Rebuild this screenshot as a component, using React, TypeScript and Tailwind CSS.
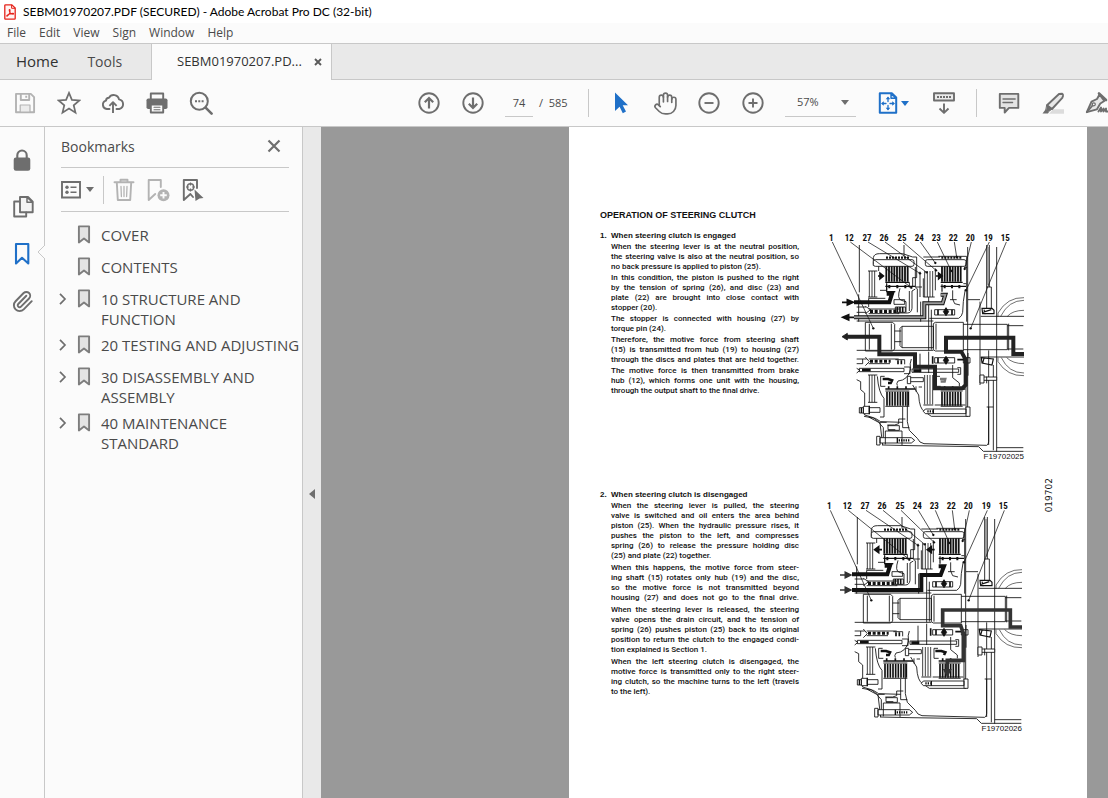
import React from 'react';
import { Hand, Paperclip } from 'lucide-react';

type IconProps = { children: React.ReactNode; className?: string };

function Glyph({ children, className = 'size-6' }: IconProps) {
  return (
    <svg
      viewBox="0 0 24 24"
      className={className}
      fill="none"
      stroke="currentColor"
      strokeWidth="1.9"
      strokeLinejoin="round"
      strokeLinecap="round"
      aria-hidden="true"
    >
      {children}
    </svg>
  );
}

function ToolButton({ label, children, className = '' }: IconProps & { label: string }) {
  return (
    <button type="button" aria-label={label} className={`flex h-11 w-11 shrink-0 items-center justify-center ${className}`}>
      {children}
    </button>
  );
}

function Caret({ className = 'text-[#6e6e6e]' }: { className?: string }) {
  return (
    <svg viewBox="0 0 8 5" className={`h-[5px] w-2 ${className}`} aria-hidden="true">
      <path d="M0 0h8L4 5z" fill="currentColor" />
    </svg>
  );
}

function TitleBar() {
  return (
    <div className="flex h-[23px] items-center bg-white pl-1 text-black">
      <svg viewBox="0 0 12 16" className="mr-[7px] h-4 w-3" aria-hidden="true">
        <path d="M.8 1.6Q.8.8 1.6.8h6.2l3.4 3.3v10.3q0 .8-.8.8H1.6q-.8 0-.8-.8z" fill="#fff4f3" stroke="#e5231b" strokeWidth="1.3" />
        <path d="M7.6.9v3.4h3.5" fill="none" stroke="#e5231b" />
        <path d="M3 12.2c2-1.4 3.2-4 3-6.2 0-.7-.8-.7-.8 0 .2 2.2 1.6 4 3.8 4.3.8 0 .8-.9 0-.9-2.2 0-4.6.8-6 2-.5.4-.3.9 0 .8z" fill="none" stroke="#e5231b" strokeWidth="1.1" />
      </svg>
      <h1 className="font-['Lato',sans-serif] text-[12px]">SEBM01970207.PDF (SECURED) - Adobe Acrobat Pro DC (32-bit)</h1>
    </div>
  );
}

function MenuBar() {
  return (
    <nav className="flex h-5 items-center gap-[13px] bg-[#fbfbfb] pl-[7px] text-[12px] text-[#4a4a4a]">
      {['File', 'Edit', 'View', 'Sign', 'Window', 'Help'].map((m) => (
        <button key={m} type="button">
          {m}
        </button>
      ))}
    </nav>
  );
}

function TabBar() {
  return (
    <div className="flex h-[37px] border-t border-[#c8c8c8] bg-[#e9e9e9] text-[#323232]">
      <div className="flex w-[151px] shrink-0 items-center gap-[29px] border-b border-[#c8c8c8] pl-4">
        <button type="button" className="text-[15px]">Home</button>
        <button type="button" className="text-[14px] text-[#4a4a4a]">Tools</button>
      </div>
      <div className="flex w-[181px] shrink-0 items-center border-x border-[#c8c8c8] bg-[#fbfbfb] pl-[25px] text-[13px]">
        <button type="button" className="w-[137px] text-left whitespace-nowrap">SEBM01970207.PD...</button>
        <button type="button" aria-label="Close tab">
          <svg viewBox="0 0 8 8" className="size-2" aria-hidden="true">
            <path d="M1 1l6 6M7 1L1 7" stroke="#5a5a5a" strokeWidth="1.9" />
          </svg>
        </button>
      </div>
      <div className="grow border-b border-[#c8c8c8]" />
    </div>
  );
}

function Divider() {
  return <div className="mx-[10px] h-7 w-px shrink-0 bg-[#c8c8c8]" />;
}

function Toolbar() {
  return (
    <div className="flex h-[47px] items-center overflow-hidden border-b border-[#c8c8c8] bg-[#fbfbfb] pl-[3px] text-[#6e6e6e]">
      <ToolButton label="Save" className="text-[#b3b3b3]">
        <Glyph>
          <path d="M3 2.9h14.8l3.3 3.3v15H3z" />
          <path d="M7.8 3v6h8.4V3M13.2 4.8v2" strokeLinecap="butt" />
          <path d="M7.2 14h9.8v7H7.2z" fill="#ececec" strokeWidth="1.2" />
        </Glyph>
      </ToolButton>
      <ToolButton label="Star">
        <Glyph>
          <path d="M12 1.9l2.9 7 7.4.6-5.6 4.8 1.8 7.3L12 17.6l-6.5 4 1.8-7.3-5.6-4.8 7.4-.6z" strokeLinejoin="miter" strokeWidth="1.7" />
        </Glyph>
      </ToolButton>
      <ToolButton label="Upload">
        <Glyph>
          <path d="M8.5 18H5.8A4.3 4.3 0 0 1 5 9.600A3 3 0 0 1 8 6.800 5.400 5.400 0 0 1 18 8.400a4.900 4.900 0 0 1 .3 9.600h-2.800" />
          <path d="M12 22V11.500M8.400 14.800L12 11.200l3.600 3.600" strokeLinecap="butt" />
        </Glyph>
      </ToolButton>
      <ToolButton label="Print">
        <Glyph>
          <path d="M5.800 8V2.500h12.400V8" />
          <rect x="1.500" y="7.500" width="21" height="10.500" rx="1.800" fill="currentColor" stroke="none" />
          <path d="M5.800 13.500h12.400v8H5.800z" fill="#fbfbfb" />
          <path d="M9 16.300h6M9 18.800h6" strokeWidth="1.100" />
        </Glyph>
      </ToolButton>
      <ToolButton label="Find">
        <Glyph>
          <circle cx="10.300" cy="10.300" r="8.500" strokeWidth="2" />
          <path d="M16.600 16.600l6 6" strokeWidth="2.600" />
          <path d="M6 9.300h2v2H6zM9.300 9.300h2v2h-2zM12.600 9.300h2v2h-2z" fill="currentColor" stroke="none" />
        </Glyph>
      </ToolButton>

      <div className="-mr-[11px] ml-auto flex shrink-0 items-center text-[12px]">
        <ToolButton label="Previous page">
          <Glyph>
            <circle cx="12" cy="12" r="9.700" />
            <path d="M12 17.500V7.500M7.800 11.200L12 7l4.200 4.200" strokeWidth="2.200" strokeLinecap="butt" strokeLinejoin="miter" />
          </Glyph>
        </ToolButton>
        <ToolButton label="Next page">
          <Glyph>
            <circle cx="12" cy="12" r="9.700" />
            <path d="M12 6.500v10M7.800 12.800L12 17l4.200-4.200" strokeWidth="2.200" strokeLinecap="butt" strokeLinejoin="miter" />
          </Glyph>
        </ToolButton>
        <input
          aria-label="Page number"
          defaultValue="74"
          className="ml-[10px] h-7 w-7 border-b border-[#c8c8c8] bg-transparent text-center text-[11px] text-[#4a4a4a] outline-none"
        />
        <span className="ml-[6px] w-[39px] whitespace-pre text-[11px] text-[#4a4a4a]">/  585</span>
        <Divider />
        <ToolButton label="Select">
          <Glyph>
            <path d="M6 1.500l13 12.700h-5.300l3.300 6.400-3.200 1.600-3.200-6.500L6 20z" fill="#1f70c8" stroke="none" />
          </Glyph>
        </ToolButton>
        <ToolButton label="Pan">
          <Hand className="size-[25px]" strokeWidth={1.6} />
        </ToolButton>
        <ToolButton label="Zoom out">
          <Glyph>
            <circle cx="12" cy="12" r="9.700" />
            <path d="M7.500 12h9" strokeLinecap="butt" />
          </Glyph>
        </ToolButton>
        <ToolButton label="Zoom in">
          <Glyph>
            <circle cx="12" cy="12" r="9.700" />
            <path d="M7.500 12h9M12 7.500v9" strokeLinecap="butt" />
          </Glyph>
        </ToolButton>
        <div className="relative ml-[10px] flex h-7 w-[71px] items-center border-b border-[#c8c8c8]">
          <select aria-label="Zoom level" defaultValue="57%" className="h-7 w-full appearance-none bg-transparent pl-3 text-[11px] text-[#4a4a4a] outline-none">
            <option>57%</option>
            <option>100%</option>
          </select>
          <span className="pointer-events-none absolute right-[7px]">
            <Caret />
          </span>
        </div>
        <button type="button" aria-label="Fit page" className="ml-5 flex h-11 w-[46px] items-center gap-px text-[#1f70c8]">
          <Glyph>
            <path d="M3.800 2.200h12l4.400 4.300v15.300H3.800z" strokeWidth="2" />
            <path d="M15 2.500v4.700h5z" fill="#cfe0f4" strokeWidth="1.400" />
            <path d="M12 7v3.500M12 14.500V18M6.500 12.500H10M14 12.500h3.500" strokeWidth="1.300" />
            <path d="M12 5.500l2.300 2.800H9.700zM12 19.500l2.300-2.800H9.700zM5 12.500l2.800-2.300v4.600zM19 12.500l-2.800-2.300v4.600z" fill="currentColor" stroke="none" />
          </Glyph>
          <Caret className="text-[#1f70c8]" />
        </button>
        <ToolButton label="Page display">
          <Glyph>
            <path d="M2 2.300h20v7.200H2z" fill="#ececec" strokeWidth="1.900" />
            <path d="M5 5h2v2H5zM8 5h2v2H8zM11 5h2v2h-2zM14 5h2v2h-2zM17 5h2v2h-2z" fill="currentColor" stroke="none" />
            <path d="M12 12.500v9M7.500 17.500l4.500 4.400 4.500-4.400" strokeLinecap="butt" />
          </Glyph>
        </ToolButton>
        <Divider />
        <ToolButton label="Comment">
          <Glyph>
            <path d="M2.800 2.900h18.500v14H12l-4.300 4.600v-4.600H2.800z" fill="#e4e4e4" />
            <path d="M6 8h12.200M6 11.500h9.600" strokeWidth="1.300" />
          </Glyph>
        </ToolButton>
        <ToolButton label="Highlight">
          <Glyph>
            <path d="M12 18.300h11v4.500H8z" fill="#dcdcdc" stroke="none" />
            <path d="M18 3l3-.3q1.300.6 1 2.300l-.7 1.800L11 18l-5-3.800z" fill="#e8e8e8" />
            <path d="M6 14.200L11 18l-3 2.300-3-.5z" fill="currentColor" strokeWidth="1" />
            <path d="M4.500 18.500L8 21l-1 1.500H1.500z" fill="currentColor" stroke="none" />
          </Glyph>
        </ToolButton>
        <ToolButton label="Sign">
          <Glyph>
            <path d="M14 2.500l7 6.500" strokeWidth="2.600" />
            <path d="M14.500 3.500L12 8l-5.500 2.700L1.800 21.200l10-2.800 3.500-5.900 4-2.500z" fill="#e8e8e8" />
            <path d="M2 21l5.500-6.500M13.500 20.500l2.500-4v4l2.500-3v3l2.500-3v3h3" />
            <circle cx="8.800" cy="13.300" r="1.500" fill="#fbfbfb" strokeWidth="1.300" />
          </Glyph>
        </ToolButton>
      </div>
    </div>
  );
}

function Rail() {
  const item = 'relative flex h-[46px] w-11 items-center justify-center';
  return (
    <aside className="flex w-[45px] shrink-0 flex-col gap-px border-r border-[#c8c8c8] bg-[#fbfbfb] pt-[10px] text-[#6e6e6e]">
      <button type="button" aria-label="Security" className={item}>
        <Glyph>
          <path d="M7.300 10.500V7.200a4.700 4.700 0 0 1 9.400 0v3.300" strokeWidth="2.100" />
          <rect x="3.700" y="9.500" width="16.600" height="13.200" rx="2.200" fill="currentColor" stroke="none" />
        </Glyph>
      </button>
      <button type="button" aria-label="Page thumbnails" className={item}>
        <Glyph className="ml-[2px] size-6">
          <path d="M9 2h8l4.700 4.700v10.500H9z" fill="#f4f4f4" />
          <path d="M16 2.300v5h5.500z" strokeWidth="1.500" />
          <path d="M8.500 6.500H3.200v15h12v-4" />
        </Glyph>
      </button>
      <button type="button" aria-label="Bookmarks" className={`${item} text-[#1f70c8]`}>
        <Glyph>
          <path d="M6 2h12.300v19.500L12 15.800 6 21.500z" strokeWidth="2.100" />
        </Glyph>
        <svg viewBox="0 0 8 14" className="absolute top-[14px] -right-px h-[14px] w-2" aria-hidden="true">
          <path d="M8 0L1 7l7 7" fill="#fbfbfb" stroke="#c8c8c8" />
        </svg>
      </button>
      <button type="button" aria-label="Attachments" className={item}>
        <Paperclip className="size-[23px]" strokeWidth={2} />
      </button>
    </aside>
  );
}

const bookmarks = [
  { title: 'COVER', expandable: false },
  { title: 'CONTENTS', expandable: false },
  { title: '10 STRUCTURE AND FUNCTION', expandable: true },
  { title: '20 TESTING AND ADJUSTING', expandable: true },
  { title: '30 DISASSEMBLY AND ASSEMBLY', expandable: true },
  { title: '40 MAINTENANCE STANDARD', expandable: true },
];

function BookmarksPanel() {
  return (
    <section className="w-[258px] shrink-0 border-r border-[#c8c8c8] bg-[#fbfbfb] text-[#4a4a4a]">
      <div className="mr-[13px] ml-4">
        <div className="flex h-[41px] items-center justify-between border-b border-[#c8c8c8] pr-2 pb-0.5">
          <h2 className="text-[14px]">Bookmarks</h2>
          <button type="button" aria-label="Close panel">
            <svg viewBox="0 0 14 14" className="size-[14px]" aria-hidden="true">
              <path d="M1.500 1.500l11 11M12.500 1.500l-11 11" stroke="#6e6e6e" strokeWidth="2.200" />
            </svg>
          </button>
        </div>
        <div className="flex h-11 items-center border-b border-[#c8c8c8] text-[#6e6e6e]">
          <button type="button" aria-label="Options" className="flex items-center gap-[5px]">
            <svg viewBox="0 0 20 18" className="h-[18px] w-5" fill="none" stroke="currentColor" aria-hidden="true">
              <path d="M1 1h18v15.500H1z" strokeWidth="1.900" />
              <path d="M9.500 6.300h6M9.500 11.300h6" strokeWidth="1.600" />
              <circle cx="6" cy="6.300" r="1.700" fill="currentColor" stroke="none" />
              <circle cx="6" cy="11.300" r="1.700" fill="currentColor" stroke="none" />
            </svg>
            <Caret />
          </button>
          <div className="ml-[9px] h-7 w-px bg-[#c8c8c8]" />
          <button type="button" aria-label="Delete bookmark" className="ml-2 text-[#b3b3b3]">
            <Glyph>
              <path d="M2.500 4.300h19M8.500 4V1.700h7V4M4.800 4.500l1 17.500h12.400l1-17.500" />
              <path d="M9 8.500l.4 10M12 8.500v10M15 8.500l-.4 10" strokeWidth="1.300" />
            </Glyph>
          </button>
          <button type="button" aria-label="New bookmark" className="ml-[10px] text-[#b3b3b3]">
            <Glyph>
              <path d="M14.800 9V2H2.700v20l6.500-6" />
              <circle cx="17.500" cy="17.300" r="6" fill="currentColor" stroke="none" />
              <path d="M17.500 14v6.600M14.200 17.300h6.600" stroke="#fbfbfb" strokeLinecap="butt" />
            </Glyph>
          </button>
          <button type="button" aria-label="Find current bookmark" className="ml-[11px]">
            <Glyph>
              <path d="M16 10V2H2.800v20l6.600-6 2.600 3" />
              <circle cx="9.500" cy="9" r="3.200" strokeWidth="1.400" />
              <path d="M9.500 4.500v3M9.500 10.500v3M5 9h3M11 9h3" strokeWidth="1.200" strokeLinecap="butt" />
              <path d="M13.500 11.500l9 8.500-4 .5-4 2.500z" fill="currentColor" stroke="none" />
            </Glyph>
          </button>
        </div>
      </div>
      <ul className="pt-[7px] pl-[14px] text-[15px]">
        {bookmarks.map((b) => (
          <li key={b.title} className="flex min-h-8 items-start pt-[6px]">
            <span className="flex h-5 w-[18px] shrink-0 items-center">
              {b.expandable && (
                <button type="button" aria-label={`Expand ${b.title}`}>
                  <svg viewBox="0 0 8 12" className="h-3 w-2" aria-hidden="true">
                    <path d="M1 .8L6 6l-5 5.200" fill="none" stroke="#6e6e6e" strokeWidth="1.700" />
                  </svg>
                </button>
              )}
            </span>
            <svg viewBox="0 0 14 20" className="mr-[10px] h-5 w-[14px] shrink-0" aria-hidden="true">
              <path d="M1.900 1.400h10.200v16L7 13.400l-5.100 4z" fill="#e4e4e4" stroke="#7d7d7d" strokeWidth="1.900" strokeLinejoin="round" />
            </svg>
            <a href="#page" className="w-[201px] leading-5">{b.title}</a>
          </li>
        ))}
      </ul>
    </section>
  );
}

const plates = (from: number, to: number, top: number, bottom: number) => {
  let d = '';
  for (let x = from; x <= to; x += 8) d += `M${x} ${top}V${bottom}`;
  return d;
};

type Label = { n: string; x: number; to: [number, number] };

const labels: Label[] = [
  { n: '1', x: 34, to: [160, 310] },
  { n: '12', x: 88, to: [274, 188] },
  { n: '27', x: 141, to: [300, 145] },
  { n: '26', x: 192, to: [320, 142] },
  { n: '25', x: 246, to: [348, 136] },
  { n: '24', x: 298, to: [346, 114] },
  { n: '23', x: 349, to: [394, 138] },
  { n: '22', x: 400, to: [410, 96] },
  { n: '20', x: 451, to: [434, 132] },
  { n: '19', x: 505, to: [438, 196] },
  { n: '15', x: 556, to: [452, 310] },
];

function ClutchDrawing({ engaged }: { engaged: boolean }) {
  const baseline = engaged ? 47 : 36;
  return (
    <svg
      viewBox={engaged ? '24 24 588 660' : '24 12 588 672'}
      className={engaged ? 'h-[220px] w-[196px]' : 'h-[224px] w-[196px]'}
      role="img"
      aria-label={engaged ? 'Steering clutch engaged' : 'Steering clutch disengaged'}
      fill="none"
      stroke="#111"
      strokeWidth="2.600"
    >
      {/* housing outline */}
      <path d="M118 60V202M116 208V290M252 60V95M500 60V250M508 60V186M500 186h14v64M530 66V680M110 246h28M110 262h28M110 288H340M110 376H340" />
      <path d="M504 66V180" stroke="#777" strokeWidth="4" />
      <path d="M160 122V98q2-12 18-12h70l30 10h12v62h-12v26M310 96h50M355 94h85v34h-8M443 66V576" />
      <path d="M110 464l12 6v24l12 10v66l26 8 20 16 8 66M186 660l90 2 200 3 14 14h120M132 574l34 6 16 10 66 2" />
      <path d="M278 480l18 30q2 42 18 50l20 14h106M262 500v90l6 26 24 24q6 14 20 16l188 5q6-2 6-12V546M506 376v284M520 420v256M530 668h80M500 546h20" />
      <path d="M146 576l30 16 14 16v30M248 546v62h20M202 600h22l12-4v-14h20M204 600v14h22M180 592h20" />

      {/* shafts */}
      <path d="M136 292h82l6 6v74l-6 6h-82zM224 318h20M224 350h20M246 304h94v64h-94zM246 304l-6 6v52l6 6M340 296l6-4h84v86h-84l-6-4zM430 298h132v76H430M566 296V376M562 302h48M562 372h48M482 274h130M482 396h130" />
      <path d="M148 296v78M214 296v78M348 296v78M480 230V480M444 224h36M444 452V384" />
      {/* ring gear */}
      <path d="M612 218q-50-2-78 46v12M612 226q-46 0-70 48M612 256q-34 0-50 18M612 452q-50 2-78-42v-12M612 444q-46 0-68-46M612 416q-34 0-52-18" strokeWidth="1.800" />

      {/* left and right upper packs */}
      <rect x="160" y="104" width="122" height="20" rx="6" fill="#fff" />
      <rect x="316" y="104" width="122" height="20" rx="6" fill="#fff" />
      <path d="M198 98h70M364 98h60" strokeWidth="7" strokeDasharray="6 3" />
      <path d={plates(199, 268, 124, 170) + plates(366, 424, 124, 170)} strokeWidth="5.500" />
      <path d="M196 172h72M362 172h66" strokeWidth="4" />
      <path d={plates(148, 170, 138, 216) + plates(314, 344, 138, 216)} strokeWidth="2.400" />
      <path d="M144 138h28M144 216h28M310 160v56h34M346 130v66M176 124v14M180 196h20v-24M286 126v60l6 6v70M288 186h18M302 230v60M326 216v160M334 254v120M268 172v16M300 140v76" />
      <path d="M196 184h90M362 184h76M200 178v22h26M366 178v22" strokeWidth="3.500" />
      <path d="M208 180v10M232 180v10M256 180v10M374 180v10M396 180v10M418 180v10" strokeWidth="6" />
      <path d="M286 192l-10 6v52q-2 14-14 14h-30M240 190q-10 32 4 36l14 4v32M436 192q-8 40-8 70-2 12-12 18h-88M398 196v26l6 14 16 4M268 198v60M222 224h32v14h-32zM390 224h20M146 220v26M146 220h50" />
      <path d="M440 176V290M430 176h10v-50" />

      {/* bearings above the shafts */}
      <path d="M136 244l16 10-16 12M146 252h92M146 266h92M344 254h60v16h-60zM226 246h30v16h-30z" />
      <path d="M150 259h80" strokeWidth="10" strokeDasharray="9 5" />
      <path d="M378 248l8 12-8 12-8-12z" fill="#111" />
      <path d="M354 254v16M396 254v16M240 246v16M248 246v16M232 246v16" strokeWidth="5" />
      <path d="M486 250h30l6 6v10h-34zM492 254l4 14M488 262l26-8" strokeWidth="3.500" />

      {/* bearings below the shafts */}
      <path d="M110 402h30M110 416h18v-14M146 402h90M146 416h64M344 398h60v16h-60zM226 404h28v14M136 396l12 14-12 12M430 398h20v16h-20z" />
      <path d="M150 409h62" strokeWidth="9" strokeDasharray="9 5" />
      <path d="M378 394l8 12-8 12-8-12z" fill="#111" />
      <path d="M338 394v22M354 398v16M412 404h26M234 406v12M244 406v12" strokeWidth="5" />
      <path d="M484 398l36 4-4 18-30-6zM492 400l-4 14" strokeWidth="3.500" />

      {/* lower bolts and pistons */}
      <path d="M118 430h134v10H118zM252 426h18v20h-18M276 432h140v10H276zM412 428h10v20h-10M262 454h10v22h-10zM272 458h38v12h-38M110 430l10 6-10 8" fill="#fff" />
      <path d="M126 435h26M280 437h24" strokeWidth="8" />
      <path d={plates(148, 170, 450, 532) + plates(314, 338, 450, 538)} strokeWidth="2.400" />
      <path d="M144 450h28M144 532h28M172 454q4 50 20 66v56h-12M196 484h-14v-30h12M362 484h-14v-30h12M274 402q-6 14-2 30-8 34-38 36-6 8-2 14M398 420v38l20 16v10M300 386v56M326 380v64M288 484v16M296 486h10M344 540h92M310 540h30" />
      <path d="M196 492h90M362 492h74M206 484v10M232 484v10M258 484v10M374 484v10M398 484v10" strokeWidth="5" />
      <path d={plates(201, 268, 500, 542) + plates(366, 424, 500, 542)} strokeWidth="5" />
      <path d="M196 498h72M196 544h72M362 498h66M362 544h66M438 480v70" />
      <path d="M118 548h12v16h-12zM130 544h18v22h-18zM148 548h32v14h-32zM316 552h122v14H316l-6-7zM438 546h12v28h-12zM170 634h10v26h-10zM180 638h94l10 8-10 8h-94zM480 450h12v24h-12zM492 456h38v10h-38" fill="#fff" />
      <path d="M148 542v26M124 548v16M340 552v14M232 638v16" strokeWidth="4" />
      <path d="M236 646h34M322 559h16" strokeWidth="7" strokeDasharray="4 3" />
      <path d="M196 658v-40h50v42M204 602h34v14h-34M500 455v20" />

      {/* piston direction arrows */}
      <path
        d={engaged ? 'M174 153h8M190 153l-10-8v16zM348 153h8M366 153l-10-8v16z' : 'M192 158h-14M170 158l12-9v18zM350 158h-14M328 158l12-9v18z'}
        fill="#111"
        strokeWidth="5"
      />

      {/* oil passages */}
      <g strokeLinejoin="miter">
        <path d="M102 232h106l8-26h-16" strokeWidth="12" />
        <path d="M188 462h16l12 4-4 8h-8" strokeWidth="8" />
        {engaged ? (
          <>
            <path d="M102 277h211v-42h55l8-26h-14" strokeWidth="12" />
            <path d="M102 277h211v-42h55l8-26h-14" stroke="#999" strokeWidth="6" />
            <path d="M66 232h16M100 232l-18-8v16z" fill="#111" strokeWidth="5" />
            <path d="M102 277H86M68 277l18-8v16z" fill="#111" strokeWidth="5" />
            <path d="M360 462h16l-2 8h-12" stroke="#777" strokeWidth="7" />
          </>
        ) : (
          <>
            <path d="M102 279h208v-45h58l10-26h-16" strokeWidth="12" />
            <path d="M66 234h16M98 234l-16-8v16zM66 279h16M98 279l-16-8v16z" fill="#333" stroke="#333" strokeWidth="5" />
            <path d="M352 462h18l12 4-4 8" strokeWidth="8" />
          </>
        )}
      </g>

      {/* power flow */}
      {engaged ? (
        <g stroke="#222">
          <path d="M612 387h-32v-49H378v42h46l13 24v76l-10 10h-82v-65h-60v-37H178v-53H80" strokeWidth="12" />
          <path d="M66 335l16-10v20z" fill="#222" />
        </g>
      ) : (
        <g stroke="#333">
          <path d="M612 390h-35v-51H374v47h54l8 22v82h-48v28" strokeWidth="11" />
          <path d="M388 538l-10-20h20z" fill="#333" strokeWidth="4" />
        </g>
      )}

      {/* reference numbers with their leader lines */}
      {labels.map((l) => (
        <g key={l.n}>
          <path d={`M${l.x + 3} ${baseline + 4}L${l.to[0]} ${l.to[1]}`} strokeWidth="2.200" />
          <circle cx={l.to[0]} cy={l.to[1]} r="3.500" fill="#111" stroke="none" />
          <text
            x={l.x}
            y={baseline}
            textAnchor="middle"
            fill="#111"
            stroke="none"
            fontSize="27"
            fontWeight="700"
            fontFamily="'Roboto Condensed', 'Open Sans Condensed', 'Liberation Sans Narrow', Roboto, sans-serif"
          >
            {l.n}
          </text>
        </g>
      ))}
    </svg>
  );
}

type Paragraph = { lines: string[]; full?: boolean };

type SectionProps = {
  number: string;
  title: string;
  paragraphs: Paragraph[];
  caption: string;
  engaged: boolean;
};

function ManualSection({ number, title, paragraphs, caption, engaged }: SectionProps) {
  return (
    <section className="flex justify-between">
      <div className="grid grid-cols-[11px_188px] content-start leading-[10px]">
        <b>{number}.</b>
        <h4 className="font-bold">{title}</h4>
        <div className={`col-start-2 flex flex-col pt-px font-['Roboto',sans-serif] font-medium ${engaged ? 'gap-px' : 'gap-0.5'}`}>
          {paragraphs.map(({ lines, full }) => (
            <p key={lines[0]}>
              {lines.map((line, i) => (
                <span
                  key={line}
                  className={`block whitespace-nowrap ${full || i < lines.length - 1 ? '[text-align-last:justify]' : ''}`}
                >
                  {line}
                </span>
              ))}
            </p>
          ))}
        </div>
      </div>
      <figure className={engaged ? 'pt-[2px]' : 'pt-[11px] pr-[2px]'}>
        <ClutchDrawing engaged={engaged} />
        <figcaption className="text-right leading-2">{caption}</figcaption>
      </figure>
    </section>
  );
}

const engagedText: Paragraph[] = [
  { lines: ['When the steering lever is at the neutral position,', 'the steering valve is also at the neutral position, so', 'no back pressure is applied to piston (25).'] },
  { lines: ['In this condition, the piston is pushed to the right', 'by the tension of spring (26), and disc (23) and', 'plate (22) are brought into close contact with', 'stopper (20).'] },
  { lines: ['The stopper is connected with housing (27) by', 'torque pin (24).'] },
  { lines: ['Therefore, the motive force from steering shaft', '(15) is transmitted from hub (19) to housing (27)', 'through the discs and plates that are held together.'], full: true },
  { lines: ['The motive force is then transmitted from brake', 'hub (12), which forms one unit with the housing,', 'through the output shaft to the final drive.'] },
];

const disengagedText: Paragraph[] = [
  { lines: ['When the steering lever is pulled, the steering', 'valve is switched and oil enters the area behind', 'piston (25). When the hydraulic pressure rises, it', 'pushes the piston to the left, and compresses', 'spring (26) to release the pressure holding disc', '(25) and plate (22) together.'] },
  { lines: ['When this happens, the motive force from steer-', 'ing shaft (15) rotates only hub (19) and the disc,', 'so the motive force is not transmitted beyond', 'housing (27) and does not go to the final drive.'], full: true },
  { lines: ['When the steering lever is released, the steering', 'valve opens the drain circuit, and the tension of', 'spring (26) pushes piston (25) back to its original', 'position to return the clutch to the engaged condi-', 'tion explained is Section 1.'] },
  { lines: ['When the left steering clutch is disengaged, the', 'motive force is transmitted only to the right steer-', 'ing clutch, so the machine turns to the left (travels', 'to the left).'] },
];

function DocumentPage() {
  return (
    <article
      id="page"
      className="mr-[21px] ml-auto flex w-[518px] shrink-0 items-start bg-white pt-[82px] pl-[31px] font-['Liberation_Sans',sans-serif] text-[8px] text-[#111]"
    >
      <div className="w-[424px]">
        <h3 className="h-[22px] text-[9px] leading-[12px] font-bold">OPERATION OF STEERING CLUTCH</h3>
        <ManualSection number="1" title="When steering clutch is engaged" paragraphs={engagedText} caption="F19702025" engaged />
        <div className="h-[29px]" />
        <ManualSection number="2" title="When steering clutch is disengaged" paragraphs={disengagedText} caption="F19702026" engaged={false} />
      </div>
      <p className="mt-[269px] ml-5 rotate-180 font-['DejaVu_Sans',sans-serif] text-[9px] leading-[10px] [writing-mode:vertical-rl]">019702</p>
    </article>
  );
}

export default function App() {
  return (
    <div className="flex min-h-screen flex-col bg-[#fbfbfb] font-['Open_Sans','Noto_Sans',sans-serif]">
      <TitleBar />
      <MenuBar />
      <TabBar />
      <Toolbar />
      <main className="flex grow overflow-hidden">
        <Rail />
        <BookmarksPanel />
        <button type="button" aria-label="Collapse panel" className="flex w-[18px] shrink-0 items-center justify-center bg-[#e9e9e9] pt-[62px]">
          <svg viewBox="0 0 6 10" className="h-[10px] w-[6px]" aria-hidden="true">
            <path d="M6 0v10L0 5z" fill="#6e6e6e" />
          </svg>
        </button>
        <div className="flex min-w-0 grow bg-[#999999]">
          <DocumentPage />
        </div>
      </main>
    </div>
  );
}
